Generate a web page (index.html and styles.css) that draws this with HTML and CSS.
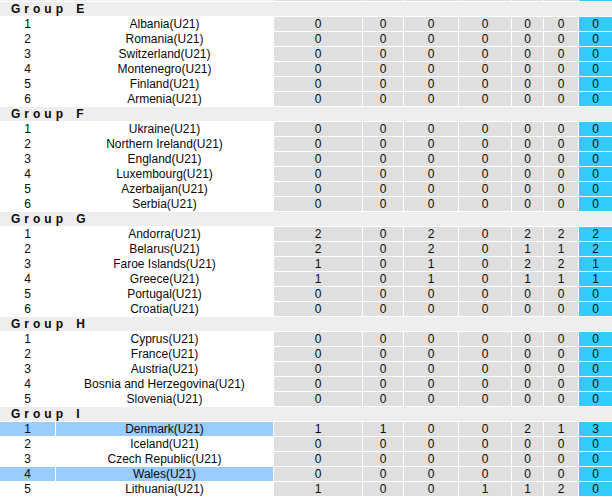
FILE: index.html
```html
<!DOCTYPE html>
<html>
<head>
<meta charset="utf-8">
<link rel="stylesheet" href="styles.css">
</head>
<body>
<table class="standings">
<colgroup>
<col class="c-rank"><col class="c-name"><col class="c-3"><col class="c-4"><col class="c-5"><col class="c-6"><col class="c-7"><col class="c-8"><col class="c-9">
</colgroup>
<tbody>
<tr class="prev"><td class="blank" colspan="2"></td><td class="n"></td><td class="n"></td><td class="n"></td><td class="n"></td><td class="n"></td><td class="n"></td><td class="pts"></td></tr>

<tr class="grp"><td colspan="9">Group E</td></tr>
<tr><td>1</td><td>Albania(U21)</td><td class="n">0</td><td class="n">0</td><td class="n">0</td><td class="n">0</td><td class="n">0</td><td class="n">0</td><td class="pts">0</td></tr>
<tr><td>2</td><td>Romania(U21)</td><td class="n">0</td><td class="n">0</td><td class="n">0</td><td class="n">0</td><td class="n">0</td><td class="n">0</td><td class="pts">0</td></tr>
<tr><td>3</td><td>Switzerland(U21)</td><td class="n">0</td><td class="n">0</td><td class="n">0</td><td class="n">0</td><td class="n">0</td><td class="n">0</td><td class="pts">0</td></tr>
<tr><td>4</td><td>Montenegro(U21)</td><td class="n">0</td><td class="n">0</td><td class="n">0</td><td class="n">0</td><td class="n">0</td><td class="n">0</td><td class="pts">0</td></tr>
<tr><td>5</td><td>Finland(U21)</td><td class="n">0</td><td class="n">0</td><td class="n">0</td><td class="n">0</td><td class="n">0</td><td class="n">0</td><td class="pts">0</td></tr>
<tr><td>6</td><td>Armenia(U21)</td><td class="n">0</td><td class="n">0</td><td class="n">0</td><td class="n">0</td><td class="n">0</td><td class="n">0</td><td class="pts">0</td></tr>

<tr class="grp"><td colspan="9">Group F</td></tr>
<tr><td>1</td><td>Ukraine(U21)</td><td class="n">0</td><td class="n">0</td><td class="n">0</td><td class="n">0</td><td class="n">0</td><td class="n">0</td><td class="pts">0</td></tr>
<tr><td>2</td><td>Northern Ireland(U21)</td><td class="n">0</td><td class="n">0</td><td class="n">0</td><td class="n">0</td><td class="n">0</td><td class="n">0</td><td class="pts">0</td></tr>
<tr><td>3</td><td>England(U21)</td><td class="n">0</td><td class="n">0</td><td class="n">0</td><td class="n">0</td><td class="n">0</td><td class="n">0</td><td class="pts">0</td></tr>
<tr><td>4</td><td>Luxembourg(U21)</td><td class="n">0</td><td class="n">0</td><td class="n">0</td><td class="n">0</td><td class="n">0</td><td class="n">0</td><td class="pts">0</td></tr>
<tr><td>5</td><td>Azerbaijan(U21)</td><td class="n">0</td><td class="n">0</td><td class="n">0</td><td class="n">0</td><td class="n">0</td><td class="n">0</td><td class="pts">0</td></tr>
<tr><td>6</td><td>Serbia(U21)</td><td class="n">0</td><td class="n">0</td><td class="n">0</td><td class="n">0</td><td class="n">0</td><td class="n">0</td><td class="pts">0</td></tr>

<tr class="grp"><td colspan="9">Group G</td></tr>
<tr><td>1</td><td>Andorra(U21)</td><td class="n">2</td><td class="n">0</td><td class="n">2</td><td class="n">0</td><td class="n">2</td><td class="n">2</td><td class="pts">2</td></tr>
<tr><td>2</td><td>Belarus(U21)</td><td class="n">2</td><td class="n">0</td><td class="n">2</td><td class="n">0</td><td class="n">1</td><td class="n">1</td><td class="pts">2</td></tr>
<tr><td>3</td><td>Faroe Islands(U21)</td><td class="n">1</td><td class="n">0</td><td class="n">1</td><td class="n">0</td><td class="n">2</td><td class="n">2</td><td class="pts">1</td></tr>
<tr><td>4</td><td>Greece(U21)</td><td class="n">1</td><td class="n">0</td><td class="n">1</td><td class="n">0</td><td class="n">1</td><td class="n">1</td><td class="pts">1</td></tr>
<tr><td>5</td><td>Portugal(U21)</td><td class="n">0</td><td class="n">0</td><td class="n">0</td><td class="n">0</td><td class="n">0</td><td class="n">0</td><td class="pts">0</td></tr>
<tr><td>6</td><td>Croatia(U21)</td><td class="n">0</td><td class="n">0</td><td class="n">0</td><td class="n">0</td><td class="n">0</td><td class="n">0</td><td class="pts">0</td></tr>

<tr class="grp"><td colspan="9">Group H</td></tr>
<tr><td>1</td><td>Cyprus(U21)</td><td class="n">0</td><td class="n">0</td><td class="n">0</td><td class="n">0</td><td class="n">0</td><td class="n">0</td><td class="pts">0</td></tr>
<tr><td>2</td><td>France(U21)</td><td class="n">0</td><td class="n">0</td><td class="n">0</td><td class="n">0</td><td class="n">0</td><td class="n">0</td><td class="pts">0</td></tr>
<tr><td>3</td><td>Austria(U21)</td><td class="n">0</td><td class="n">0</td><td class="n">0</td><td class="n">0</td><td class="n">0</td><td class="n">0</td><td class="pts">0</td></tr>
<tr><td>4</td><td>Bosnia and Herzegovina(U21)</td><td class="n">0</td><td class="n">0</td><td class="n">0</td><td class="n">0</td><td class="n">0</td><td class="n">0</td><td class="pts">0</td></tr>
<tr><td>5</td><td>Slovenia(U21)</td><td class="n">0</td><td class="n">0</td><td class="n">0</td><td class="n">0</td><td class="n">0</td><td class="n">0</td><td class="pts">0</td></tr>

<tr class="grp"><td colspan="9">Group I</td></tr>
<tr class="hl"><td>1</td><td>Denmark(U21)</td><td class="n">1</td><td class="n">1</td><td class="n">0</td><td class="n">0</td><td class="n">2</td><td class="n">1</td><td class="pts">3</td></tr>
<tr><td>2</td><td>Iceland(U21)</td><td class="n">0</td><td class="n">0</td><td class="n">0</td><td class="n">0</td><td class="n">0</td><td class="n">0</td><td class="pts">0</td></tr>
<tr><td>3</td><td>Czech Republic(U21)</td><td class="n">0</td><td class="n">0</td><td class="n">0</td><td class="n">0</td><td class="n">0</td><td class="n">0</td><td class="pts">0</td></tr>
<tr class="hl"><td>4</td><td>Wales(U21)</td><td class="n">0</td><td class="n">0</td><td class="n">0</td><td class="n">0</td><td class="n">0</td><td class="n">0</td><td class="pts">0</td></tr>
<tr><td>5</td><td>Lithuania(U21)</td><td class="n">1</td><td class="n">0</td><td class="n">0</td><td class="n">1</td><td class="n">1</td><td class="n">2</td><td class="pts">0</td></tr>
</tbody>
</table>
</body>
</html>
```

FILE: styles.css
```css
html, body {
  margin: 0;
  padding: 0;
  overflow: hidden;
  background: #ffffff;
}

.standings {
  table-layout: fixed;
  border-collapse: separate;
  border-spacing: 1px;
  width: 614px;
  margin: -14px 0 0 -1px;
  font-family: "Liberation Sans", Arial, sans-serif;
  font-size: 12px;
  color: #0a0a0a;
}

.c-rank { width: 55px; }
.c-name { width: 217px; }
.c-3 { width: 88px; }
.c-4 { width: 40px; }
.c-5 { width: 54px; }
.c-6 { width: 52px; }
.c-7 { width: 31px; }
.c-8 { width: 34px; }
.c-9 { width: 33px; }

.standings td {
  height: 14px;
  padding: 0;
  line-height: 14px;
  text-align: center;
  white-space: nowrap;
  overflow: hidden;
}

.standings td.n {
  background: #dfdfdf;
}

.standings td.pts {
  background: #33ccff;
}

.standings td.blank {
  background: #eeeeee;
}

.standings tr.grp td {
  background: #eeeeee;
  text-align: left;
  padding-left: 11px;
  font-weight: bold;
  letter-spacing: 4px;
  word-spacing: 2px;
}

.standings tr.hl td:nth-child(1),
.standings tr.hl td:nth-child(2) {
  background: #99ccff;
}
```
